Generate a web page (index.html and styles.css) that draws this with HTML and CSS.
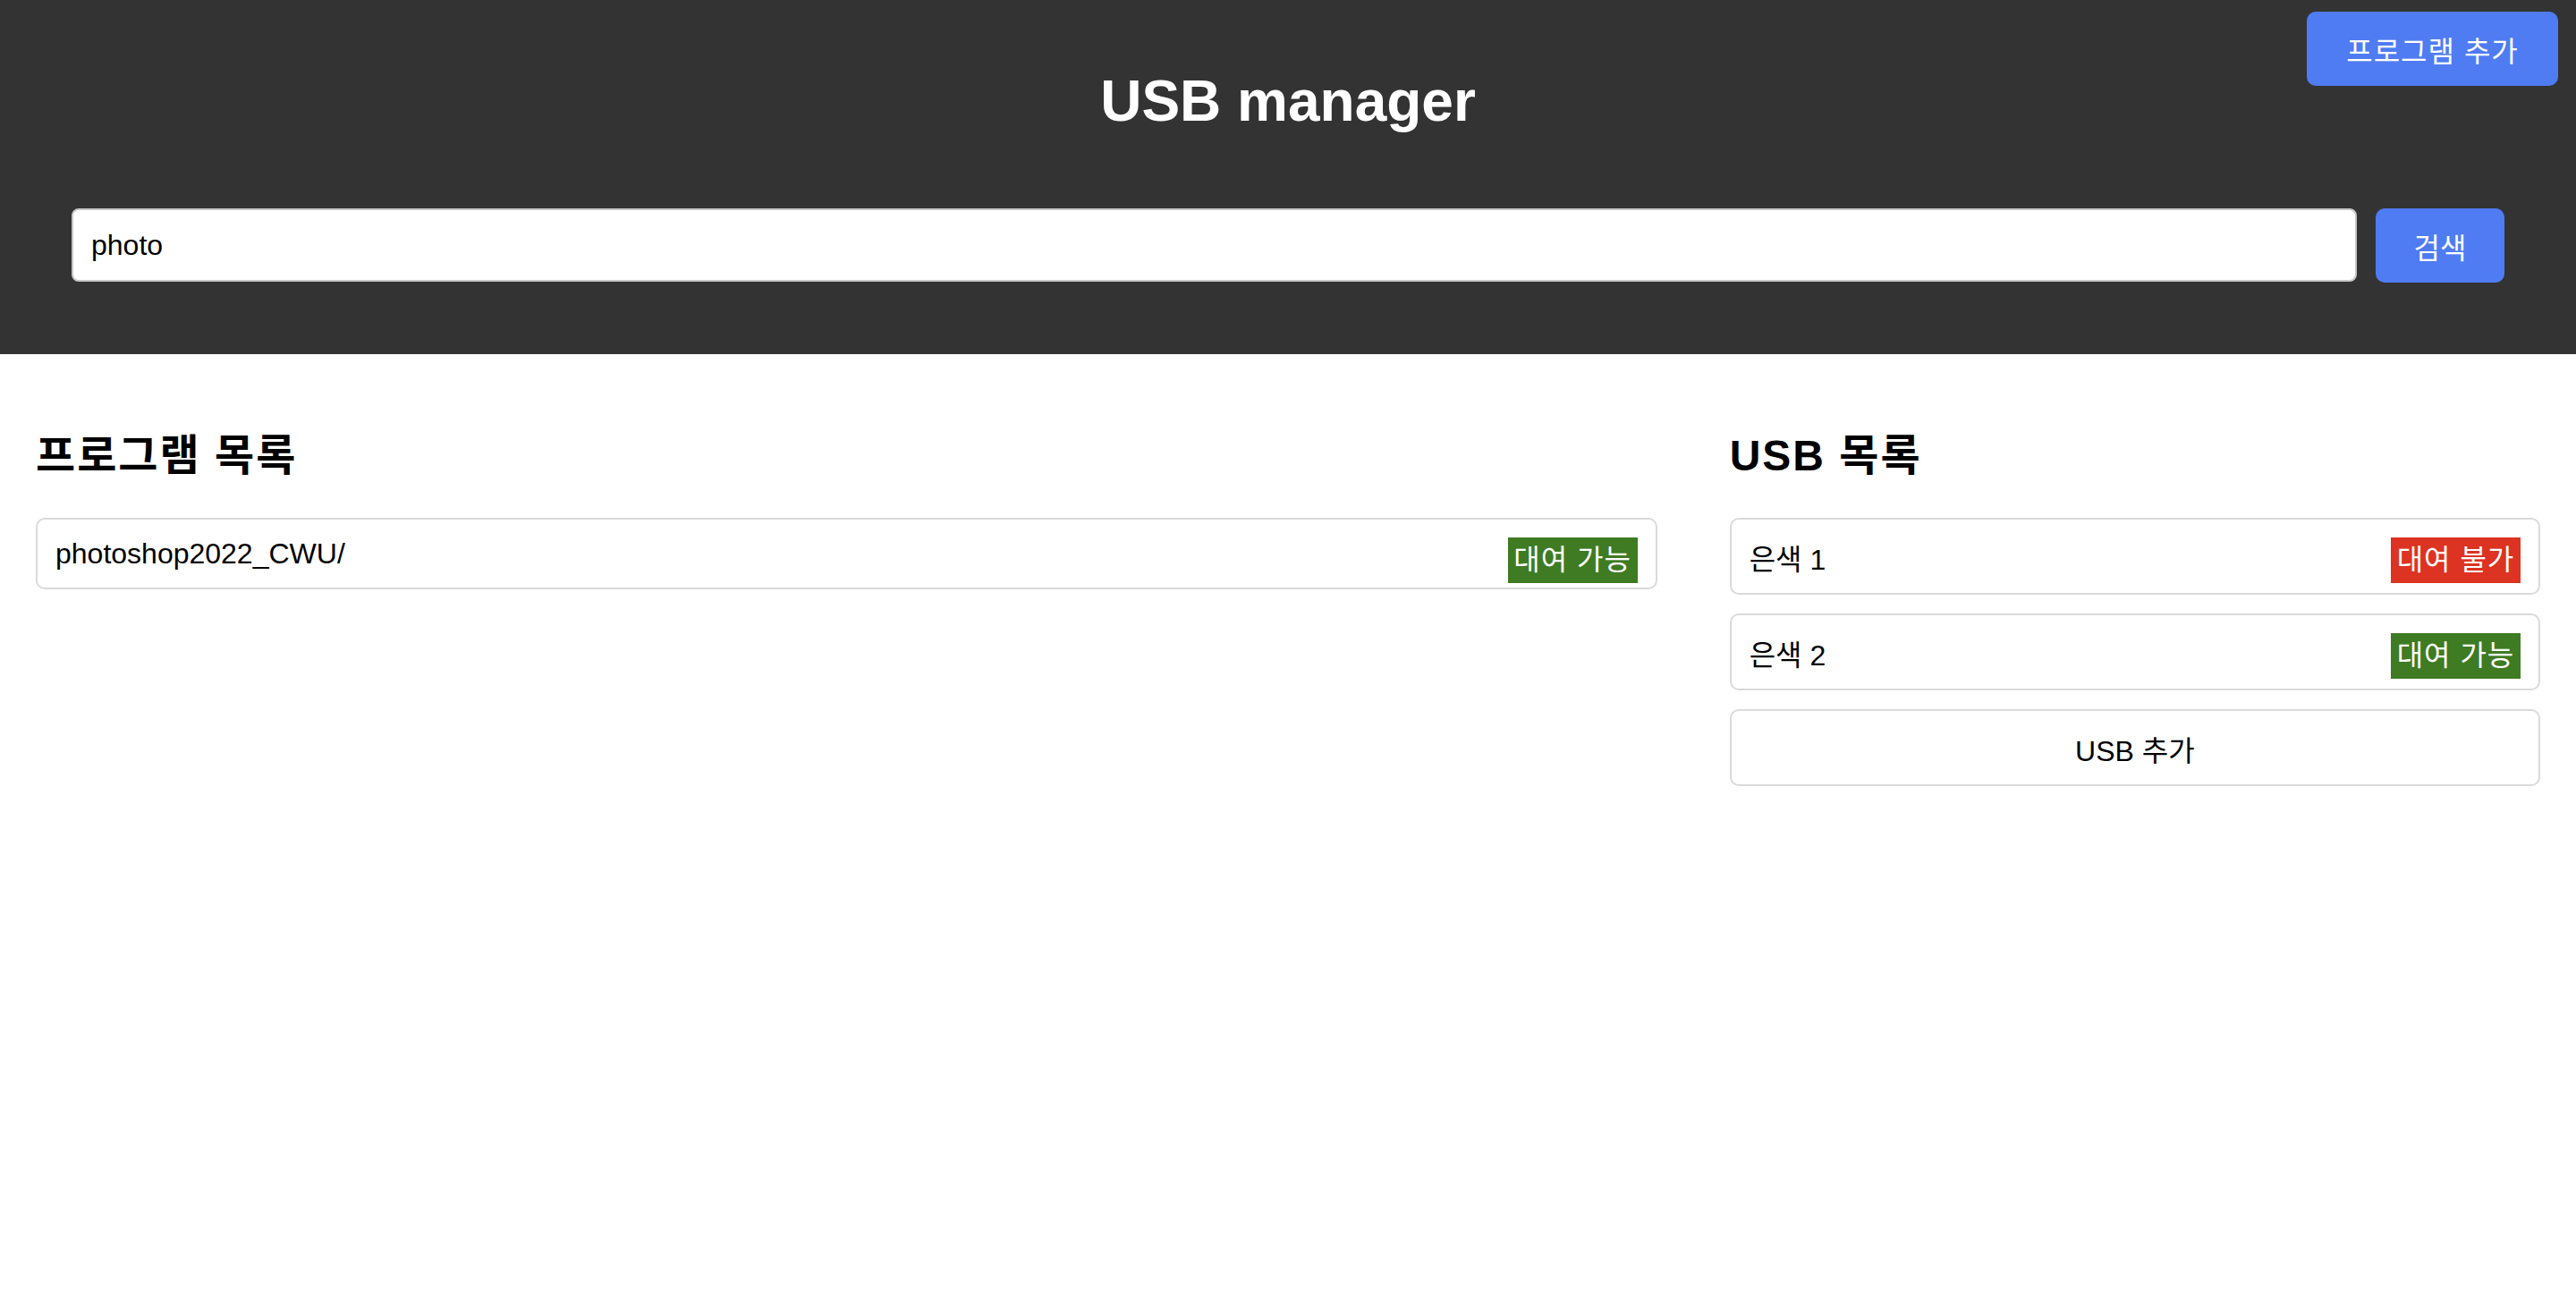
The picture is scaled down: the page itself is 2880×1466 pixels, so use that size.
FILE: index.html
```html
<!DOCTYPE html>
<html lang="ko">
<head>
<meta charset="utf-8">
<title>USB manager</title>
<link rel="stylesheet" href="styles.css">
</head>
<body>
<header class="topbar">
  <button class="btn btn--add" type="button">프로그램 추가</button>
  <h1 class="topbar__title">USB manager</h1>
  <form class="search">
    <input class="search__input" type="text" value="photo">
    <button class="btn btn--search" type="button">검색</button>
  </form>
</header>
<main class="content">
  <section class="panel">
    <h2 class="panel__title">프로그램 목록</h2>
    <div class="list">
      <div class="item item--program"><span class="badge badge--ok">대여 가능</span>photoshop2022_CWU/</div>
    </div>
  </section>
  <section class="panel">
    <h2 class="panel__title">USB 목록</h2>
    <div class="list">
      <div class="item item--usb"><span class="badge badge--no">대여 불가</span>은색 1</div>
      <div class="item item--usb"><span class="badge badge--ok">대여 가능</span>은색 2</div>
      <div class="item item--usb item--add">USB 추가</div>
    </div>
  </section>
</main>
</body>
</html>
```

FILE: styles.css
```css
html, body {
  margin: 0;
  padding: 0;
  background: #ffffff;
}

body {
  font-family: "Liberation Sans", "Noto Sans CJK KR", sans-serif;
  font-size: 32px;
  color: #000000;
}

.topbar {
  position: relative;
  background: #333333;
  padding: 76px 80px 80px;
}

.topbar__title {
  margin: 0;
  font-size: 64px;
  line-height: 74px;
  font-weight: bold;
  color: #ffffff;
  text-align: center;
}

.btn {
  font-family: "Liberation Sans", "Noto Sans CJK KR", sans-serif;
  font-size: 32px;
  color: #ffffff;
  background: #4f7cf2;
  border: none;
  border-radius: 10px;
  padding: 0;
  cursor: pointer;
}

.btn--add {
  position: absolute;
  top: 13px;
  right: 20px;
  width: 281px;
  height: 83px;
  letter-spacing: 1px;
}

.search {
  display: flex;
  gap: 21px;
  margin: 83px 0 0;
  align-items: flex-start;
}

.search__input {
  flex: 1;
  box-sizing: border-box;
  height: 82px;
  margin: 0;
  padding: 0 20px;
  border: 2px solid #c8c8c8;
  border-radius: 8px;
  background: #ffffff;
  font-family: "Liberation Sans", "Noto Sans CJK KR", sans-serif;
  font-size: 32px;
  color: #000000;
  outline: none;
}

.btn--search {
  width: 144px;
  height: 83px;
}

.content {
  display: grid;
  grid-template-columns: 2fr 1fr;
  column-gap: 81px;
  padding: 86px 40px 0;
}

.panel__title {
  margin: 0 0 41px;
  font-size: 48px;
  line-height: 56px;
  font-weight: bold;
  letter-spacing: 2px;
}

.list {
  display: block;
}

.item {
  border: 2px solid #dadada;
  border-radius: 10px;
  padding: 20px;
  margin-bottom: 21px;
}

.item--program {
  line-height: 36px;
}

.item--usb {
  line-height: 50px;
  padding-bottom: 12px;
}

.item--add {
  text-align: center;
}

.badge {
  float: right;
  box-sizing: border-box;
  width: 145px;
  height: 51px;
  line-height: 51px;
  text-align: center;
  color: #ffffff;
  font-size: 32px;
  letter-spacing: 1px;
}

.badge--ok {
  background: #3e7b22;
}

.badge--no {
  background: #dd3322;
}
```
